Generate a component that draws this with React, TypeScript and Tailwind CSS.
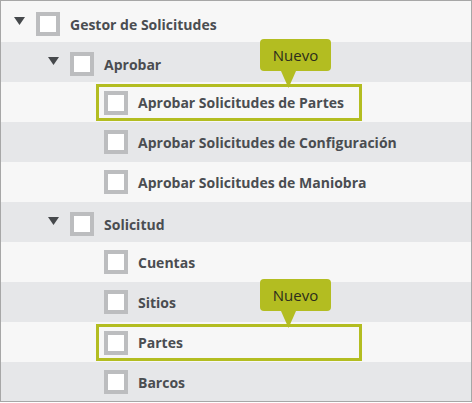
const LIME = "#b3bd21";

type Node = {
  label: string;
  level: 0 | 1 | 2;
  parent?: boolean;
  isNew?: boolean;
};

const ROWS: Node[] = [
  { label: "Gestor de Solicitudes", level: 0, parent: true },
  { label: "Aprobar", level: 1, parent: true },
  { label: "Aprobar Solicitudes de Partes", level: 2, isNew: true },
  { label: "Aprobar Solicitudes de Configuración", level: 2 },
  { label: "Aprobar Solicitudes de Maniobra", level: 2 },
  { label: "Solicitud", level: 1, parent: true },
  { label: "Cuentas", level: 2 },
  { label: "Sitios", level: 2 },
  { label: "Partes", level: 2, isNew: true },
  { label: "Barcos", level: 2 },
];

const INDENT = ["pl-[13px]", "pl-[47px]", "pl-[81px]"];

function Checkbox() {
  return <span className="block h-6 w-6 shrink-0 border-4 border-[#bcbdbf] bg-white" />;
}

function Caret() {
  return (
    <svg width="11" height="8" viewBox="0 0 11 8" className="mb-[6px] block">
      <polygon points="0,0 11,0 5.5,8" fill="#46494c" />
    </svg>
  );
}

function NewBadge() {
  return (
    <div className="absolute left-[161px] top-[-48px] z-10">
      <div
        className="flex h-8 w-[71px] items-center justify-center rounded-[4px] text-[15px] font-normal text-[#2b2c1c]"
        style={{ backgroundColor: LIME }}
      >
        Nuevo
      </div>
      <svg width="15" height="17" viewBox="0 0 15 17" className="absolute left-[21px] top-8 block">
        <polygon points="0,0 15,0 7.5,17" fill={LIME} />
      </svg>
    </div>
  );
}

function Row({ node, index }: { node: Node; index: number }) {
  const bg = index % 2 === 0 ? "bg-[#f7f7f7]" : "bg-[#e6e7e9]";
  const label = <span className="ml-[10px] whitespace-nowrap">{node.label}</span>;

  return (
    <div className={`flex h-10 items-center ${bg} ${INDENT[node.level]} ${node.parent ? "pt-1" : ""}`}>
      <div className="flex w-[22px] shrink-0 items-center">{node.parent && <Caret />}</div>
      {node.isNew ? (
        <div className="relative -ml-2 mt-px flex h-[37px] w-[266px] items-center border-[3px] px-[5px]" style={{ borderColor: LIME }}>
          <Checkbox />
          {label}
          <NewBadge />
        </div>
      ) : (
        <>
          <Checkbox />
          {label}
        </>
      )}
    </div>
  );
}

export default function App() {
  return (
    <div
      className="h-[402px] w-[472px] overflow-hidden border border-[#a7a7a7] bg-[#f7f7f7] pt-px text-[14px] font-bold text-[#4a4d51]"
      style={{ fontFamily: '"Open Sans", "Liberation Sans", sans-serif' }}
    >
      {ROWS.map((node, i) => (
        <Row key={i} node={node} index={i} />
      ))}
    </div>
  );
}
